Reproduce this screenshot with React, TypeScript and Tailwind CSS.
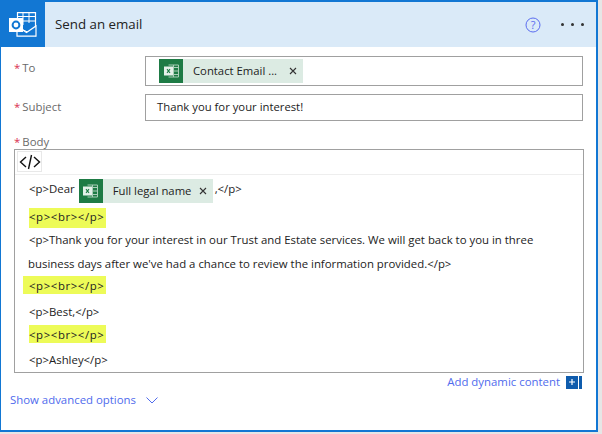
import React from "react";

const ExcelIcon = () => (
    <svg width="15" height="14" viewBox="0 0 15 14" fill="none">
        <path d="M4.5 1H14.5V13H4.5" stroke="#a9cfb8" strokeWidth="1" />
        <path d="M9 3.5H14M9 7H14M9 10.5H14M9.5 1V13" stroke="#a9cfb8" strokeWidth="1" />
        <rect x="0" y="2.5" width="9" height="9" fill="#e4f0e9" />
        <path d="M3 5.2l3 3.6M6 5.2l-3 3.6" stroke="#1e7b45" strokeWidth="1.1" />
    </svg>
);

const OutlookIcon = () => (
    <svg width="28" height="25" viewBox="0 0 28 25" fill="none">
        <path d="M8.5 6V0.7H26.5V14" stroke="#fff" strokeWidth="1.2" />
        <path d="M8.5 4.5H26M14 1V13M20 1V11M14 9H26" stroke="#fff" strokeWidth="1" />
        <path d="M8 15L27 24" stroke="#fff" strokeWidth="1" />
        <path d="M8 24.2H27V14L17.5 20.5L8 14Z" fill="#1277d3" stroke="#fff" strokeWidth="1.2" />
        <rect x="0" y="6" width="14" height="14" fill="#fff" />
        <circle cx="7" cy="13" r="3.4" stroke="#1277d3" strokeWidth="2" />
    </svg>
);

const Token = ({ label, width }: { label: string; width: string }) => (
    <span className={`flex h-6 shrink-0 items-center bg-[#dcebe3] text-[11.3px] text-[#222] ${width}`}>
        <span className="flex h-6 w-6 shrink-0 items-center justify-center bg-[#1e7b45]">
            <ExcelIcon />
        </span>
        <span className="ml-[10px] flex-1 whitespace-nowrap">{label}</span>
        <svg className="mr-[6px]" width="8" height="8" viewBox="0 0 8 8">
            <path d="M1 1l6 6M7 1l-6 6" stroke="#333" strokeWidth="1.1" />
        </svg>
    </span>
);

const Label = ({ text }: { text: string }) => (
    <div className="text-[11.4px] leading-4 text-[#6a6a6a]">
        <span className="mr-[2px] text-[#d9304f]">*</span>
        {text}
    </div>
);

const Mark = ({ className }: { className: string }) => (
    <span className={`block w-[77px] bg-[#edfb58] leading-4 tracking-[0.6px] ${className}`}>
        {"<p><br></p>"}
    </span>
);

export default function App() {
    return (
        <div className="h-[434px] w-[602px] overflow-hidden bg-[#e6e6e6] font-['Open_Sans','Noto_Sans',sans-serif]">
            <div className="h-[432px] w-[598px] border-x-2 border-y-2 border-[#1277d3] border-l-[1px] bg-white">
                <div className="flex h-[45px] items-center bg-[#daeaf8]">
                    <div className="ml-[-1px] flex h-[45px] w-[45px] items-center justify-center bg-[#1277d3]">
                        <OutlookIcon />
                    </div>
                    <span className="ml-[10px] text-[13.3px] text-[#222]">Send an email</span>
                    <svg className="ml-auto mr-[20px]" width="16" height="16" viewBox="0 0 16 16" fill="none">
                        <circle cx="8" cy="8" r="7" stroke="#5b6df0" strokeWidth="1" />
                        <text x="8" y="12" textAnchor="middle" fontSize="11" fill="#5b6df0">?</text>
                    </svg>
                    <div className="mr-[12px] flex gap-[7px]">
                        <span className="h-[3px] w-[3px] rounded-full bg-[#333]" />
                        <span className="h-[3px] w-[3px] rounded-full bg-[#333]" />
                        <span className="h-[3px] w-[3px] rounded-full bg-[#333]" />
                    </div>
                </div>

                <div className="ml-[13px] mr-[13px] mt-[9px] flex items-start">
                    <div className="w-[131px] pt-[4px]"><Label text="To" /></div>
                    <div className="flex h-[30px] flex-1 items-center border border-[#a0a0a0] pl-[13px]">
                        <Token label="Contact Email ..." width="w-[144px]" />
                    </div>
                </div>
                <div className="ml-[13px] mr-[13px] mt-[8px] flex items-start">
                    <div className="w-[131px] pt-[5px]"><Label text="Subject" /></div>
                    <div className="flex h-[27px] flex-1 items-center border border-[#a0a0a0] pl-[11px] text-[11.3px] text-[#222]">
                        Thank you for your interest!
                    </div>
                </div>

                <div className="ml-[13px] mt-[13px] h-[15px]"><Label text="Body" /></div>
                <div className="ml-[13px] mr-[12px] h-[224px] border border-[#a0a0a0] text-[11.4px] text-[#222]">
                    <div className="h-[25px] border-b border-[#eeeeee] pl-[2px] pt-[1px]">
                        <span className="flex h-[21px] w-[25px] items-center justify-center border border-[#e8e8e8]">
                            <svg width="22" height="16" viewBox="0 0 22 16" fill="none">
                                <path d="M7 3L1.5 8L7 13M15 3L20.5 8L15 13M12.5 1L9.5 15" stroke="#111" strokeWidth="1.4" />
                            </svg>
                        </span>
                    </div>
                    <div className="flex flex-col pl-[14px]">
                        <div className="flex h-[33px] items-start whitespace-nowrap pt-[4px] leading-4">
                            <span className="mt-[2px]">{"<p>Dear"}</span>
                            <span className="ml-[4px] mr-[2px]"><Token label="Full legal name" width="w-[134px]" /></span>
                            <span className="mt-[2px]">{",</p>"}</span>
                        </div>
                        <div className="h-[20px]"><Mark className="h-[20px] pt-[1px]" /></div>
                        <div className="flex h-[24px] items-center whitespace-nowrap">
                            {"<p>Thank you for your interest in our Trust and Estate services. We will get back to you in three"}
                        </div>
                        <div className="ml-[-1px] flex h-[24px] items-center whitespace-nowrap">
                            {"business days after we've had a chance to review the information provided.</p>"}
                        </div>
                        <div className="h-[24px]"><Mark className="ml-[-6px] h-[18px] w-[83px] pl-[6px] pt-[2px]" /></div>
                        <div className="flex h-[24px] items-center">{"<p>Best,</p>"}</div>
                        <div className="h-[24px] pt-[1px]"><Mark className="h-[18px] pt-[2px]" /></div>
                        <div className="flex h-[24px] items-center">{"<p>Ashley</p>"}</div>
                    </div>
                </div>

                <div className="mr-[14px] mt-[2px] flex h-[14px] items-center justify-end text-[11.4px] text-[#4f6bed]">
                    <span>Add dynamic content</span>
                    <span className="ml-[6px] flex h-[13px] w-[12px] items-center justify-center bg-[#0f5cad]">
                        <svg width="6" height="6" viewBox="0 0 6 6">
                            <path d="M3 0V6M0 3H6" stroke="#fff" strokeWidth="1.2" />
                        </svg>
                    </span>
                    <span className="ml-[1px] h-[13px] w-[3px] bg-[#0f5cad]" />
                </div>

                <div className="ml-[9px] mt-[2px] flex h-[18px] items-center text-[11.4px] text-[#4f6bed]">
                    <span>Show advanced options</span>
                    <svg className="ml-[10px]" width="12" height="7" viewBox="0 0 12 7" fill="none">
                        <path d="M0.5 0.5L6 6L11.5 0.5" stroke="#4f6bed" strokeWidth="1" />
                    </svg>
                </div>
            </div>
        </div>
    );
}
